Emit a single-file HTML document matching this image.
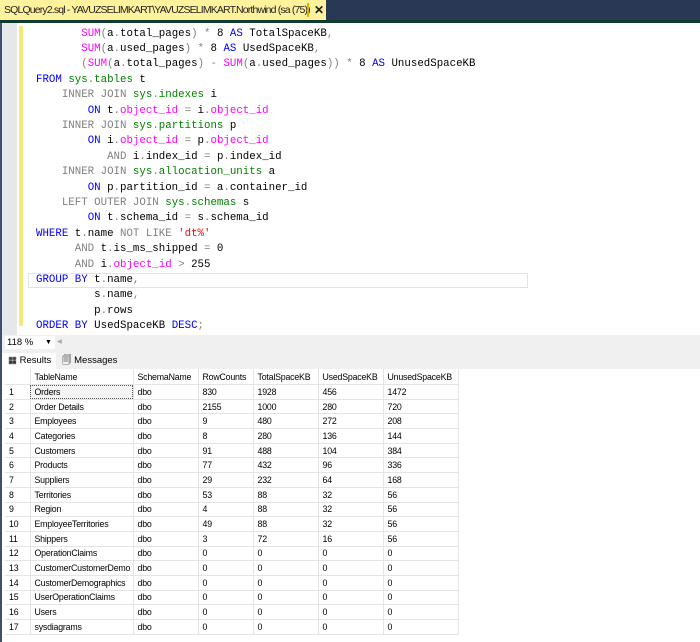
<!DOCTYPE html>
<html><head><style>
body{margin:0;width:700px;height:642px;overflow:hidden;background:#fff;position:relative;font-family:"Liberation Sans",sans-serif}
#top{position:absolute;left:0;top:0;width:700px;height:20px;background:#293955}
#tab{position:absolute;left:0;top:0;width:326px;height:20px;background:#fff29d;font-size:10.5px;letter-spacing:-0.85px;line-height:20px;color:#1e1e1e;padding-left:4px;box-sizing:border-box;white-space:nowrap;overflow:hidden}
#tab .x{position:absolute;left:314px;top:0;font-weight:bold;font-size:12px}
#tab .bar{position:absolute;left:307px;top:3px;width:2px;height:14px;background:#e0b000}
#gl{position:absolute;left:0;top:20px;width:700px;height:3px;background:#0e3b2e}
#lb{position:absolute;left:0;top:23px;width:2px;height:619px;background:#3e4f70}
#gut{position:absolute;left:2px;top:23px;width:15px;height:312px;background:#e6e7e8}
#yb{position:absolute;left:19px;top:26px;width:4px;height:300px;background:#f5e97a}
#code{position:absolute;left:36px;top:26.5px;font-family:"Liberation Mono",monospace;font-size:10.77px;line-height:15.4px;white-space:pre;color:#000}
.k{color:#0000ff}.f{color:#ff00ff}.s{color:#008000}.g{color:#808080}.r{color:#ff0000}
#cur{position:absolute;left:28px;top:273px;width:500px;height:15px;border:1px solid #e3e3e3;box-sizing:border-box}
#zoom{position:absolute;left:2px;top:335px;width:698px;height:16px;background:#f0f0f0;font-size:9.5px}
#zoom .box{position:absolute;left:3px;top:1px;width:50px;height:13px;background:#fff;line-height:13px;padding-left:2px;box-sizing:border-box}
#tabs{position:absolute;left:2px;top:351px;width:698px;height:18px;background:#f0f0f0;font-size:9.5px}
.t{position:absolute;top:2px;height:16px;line-height:16px}
#grid{position:absolute;left:2px;top:369px;width:698px;height:273px;background:#fff}
table{border-collapse:collapse;table-layout:fixed;width:453px;font-size:8.8px;letter-spacing:-0.2px;color:#000;position:absolute;left:3px;top:0}
td{height:14.7px;padding:0 0 0 4px;border-right:1px solid #e4e4e4;border-bottom:1px solid #e4e4e4;box-sizing:border-box;white-space:nowrap;overflow:hidden}
tr:first-child td{height:15.5px}
</style></head><body>
<div id="top"><div id="tab">SQLQuery2.sql - YAVUZSELIMKART\YAVUZSELIMKART.Northwind (sa (75))<span class="bar"></span><span class="x">✕</span></div></div>
<div id="gl"></div><div id="lb"></div><div id="gut"></div><div id="yb"></div>
<div id="cur"></div>
<div id="code">       <span class="f">SUM</span><span class="g">(</span>a<span class="g">.</span>total_pages<span class="g">)</span> <span class="g">*</span> 8 <span class="k">AS</span> TotalSpaceKB<span class="g">,</span>
       <span class="f">SUM</span><span class="g">(</span>a<span class="g">.</span>used_pages<span class="g">)</span> <span class="g">*</span> 8 <span class="k">AS</span> UsedSpaceKB<span class="g">,</span>
       <span class="g">(</span><span class="f">SUM</span><span class="g">(</span>a<span class="g">.</span>total_pages<span class="g">) -</span> <span class="f">SUM</span><span class="g">(</span>a<span class="g">.</span>used_pages<span class="g">))</span> <span class="g">*</span> 8 <span class="k">AS</span> UnusedSpaceKB
<span class="k">FROM</span> <span class="s">sys</span><span class="g">.</span><span class="s">tables</span> t
    <span class="g">INNER JOIN</span> <span class="s">sys</span><span class="g">.</span><span class="s">indexes</span> i
        <span class="k">ON</span> t<span class="g">.</span><span class="f">object_id</span> <span class="g">=</span> i<span class="g">.</span><span class="f">object_id</span>
    <span class="g">INNER JOIN</span> <span class="s">sys</span><span class="g">.</span><span class="s">partitions</span> p
        <span class="k">ON</span> i<span class="g">.</span><span class="f">object_id</span> <span class="g">=</span> p<span class="g">.</span><span class="f">object_id</span>
           <span class="g">AND</span> i<span class="g">.</span>index_id <span class="g">=</span> p<span class="g">.</span>index_id
    <span class="g">INNER JOIN</span> <span class="s">sys</span><span class="g">.</span><span class="s">allocation_units</span> a
        <span class="k">ON</span> p<span class="g">.</span>partition_id <span class="g">=</span> a<span class="g">.</span>container_id
    <span class="g">LEFT OUTER JOIN</span> <span class="s">sys</span><span class="g">.</span><span class="s">schemas</span> s
        <span class="k">ON</span> t<span class="g">.</span>schema_id <span class="g">=</span> s<span class="g">.</span>schema_id
<span class="k">WHERE</span> t<span class="g">.</span>name <span class="g">NOT LIKE</span> <span class="r">'dt%'</span>
      <span class="g">AND</span> t<span class="g">.</span>is_ms_shipped <span class="g">=</span> 0
      <span class="g">AND</span> i<span class="g">.</span><span class="f">object_id</span> <span class="g">&gt;</span> 255
<span class="k">GROUP BY</span> t<span class="g">.</span>name<span class="g">,</span>
         s<span class="g">.</span>name<span class="g">,</span>
         p<span class="g">.</span>rows
<span class="k">ORDER BY</span> UsedSpaceKB <span class="k">DESC</span><span class="g">;</span></div>
<div id="zoom"><div class="box">118 %<span style="position:absolute;left:40px;font-size:7px">▼</span></div><span style="position:absolute;left:55px;top:1px;color:#aaa">◂</span></div>
<div id="tabs"><div class="t" style="left:0;width:54px;background:#fff;padding-left:6px;box-sizing:border-box">▦ Results</div><div class="t" style="left:58px;padding-left:2px">🗐 Messages</div></div>
<div id="grid"><table>
<colgroup><col style="width:25px"><col style="width:103px"><col style="width:65px"><col style="width:55px"><col style="width:65px"><col style="width:65px"><col style="width:75px"></colgroup>
<tr><td></td><td>TableName</td><td>SchemaName</td><td>RowCounts</td><td>TotalSpaceKB</td><td>UsedSpaceKB</td><td>UnusedSpaceKB</td></tr>
<tr><td>1</td><td style="outline:1px dotted #555;outline-offset:-1px;background:#f4f4f4">Orders</td><td>dbo</td><td>830</td><td>1928</td><td>456</td><td>1472</td></tr>
<tr><td>2</td><td>Order Details</td><td>dbo</td><td>2155</td><td>1000</td><td>280</td><td>720</td></tr>
<tr><td>3</td><td>Employees</td><td>dbo</td><td>9</td><td>480</td><td>272</td><td>208</td></tr>
<tr><td>4</td><td>Categories</td><td>dbo</td><td>8</td><td>280</td><td>136</td><td>144</td></tr>
<tr><td>5</td><td>Customers</td><td>dbo</td><td>91</td><td>488</td><td>104</td><td>384</td></tr>
<tr><td>6</td><td>Products</td><td>dbo</td><td>77</td><td>432</td><td>96</td><td>336</td></tr>
<tr><td>7</td><td>Suppliers</td><td>dbo</td><td>29</td><td>232</td><td>64</td><td>168</td></tr>
<tr><td>8</td><td>Territories</td><td>dbo</td><td>53</td><td>88</td><td>32</td><td>56</td></tr>
<tr><td>9</td><td>Region</td><td>dbo</td><td>4</td><td>88</td><td>32</td><td>56</td></tr>
<tr><td>10</td><td>EmployeeTerritories</td><td>dbo</td><td>49</td><td>88</td><td>32</td><td>56</td></tr>
<tr><td>11</td><td>Shippers</td><td>dbo</td><td>3</td><td>72</td><td>16</td><td>56</td></tr>
<tr><td>12</td><td>OperationClaims</td><td>dbo</td><td>0</td><td>0</td><td>0</td><td>0</td></tr>
<tr><td>13</td><td>CustomerCustomerDemo</td><td>dbo</td><td>0</td><td>0</td><td>0</td><td>0</td></tr>
<tr><td>14</td><td>CustomerDemographics</td><td>dbo</td><td>0</td><td>0</td><td>0</td><td>0</td></tr>
<tr><td>15</td><td>UserOperationClaims</td><td>dbo</td><td>0</td><td>0</td><td>0</td><td>0</td></tr>
<tr><td>16</td><td>Users</td><td>dbo</td><td>0</td><td>0</td><td>0</td><td>0</td></tr>
<tr><td>17</td><td>sysdiagrams</td><td>dbo</td><td>0</td><td>0</td><td>0</td><td>0</td></tr>
</table></div>
</body></html>
